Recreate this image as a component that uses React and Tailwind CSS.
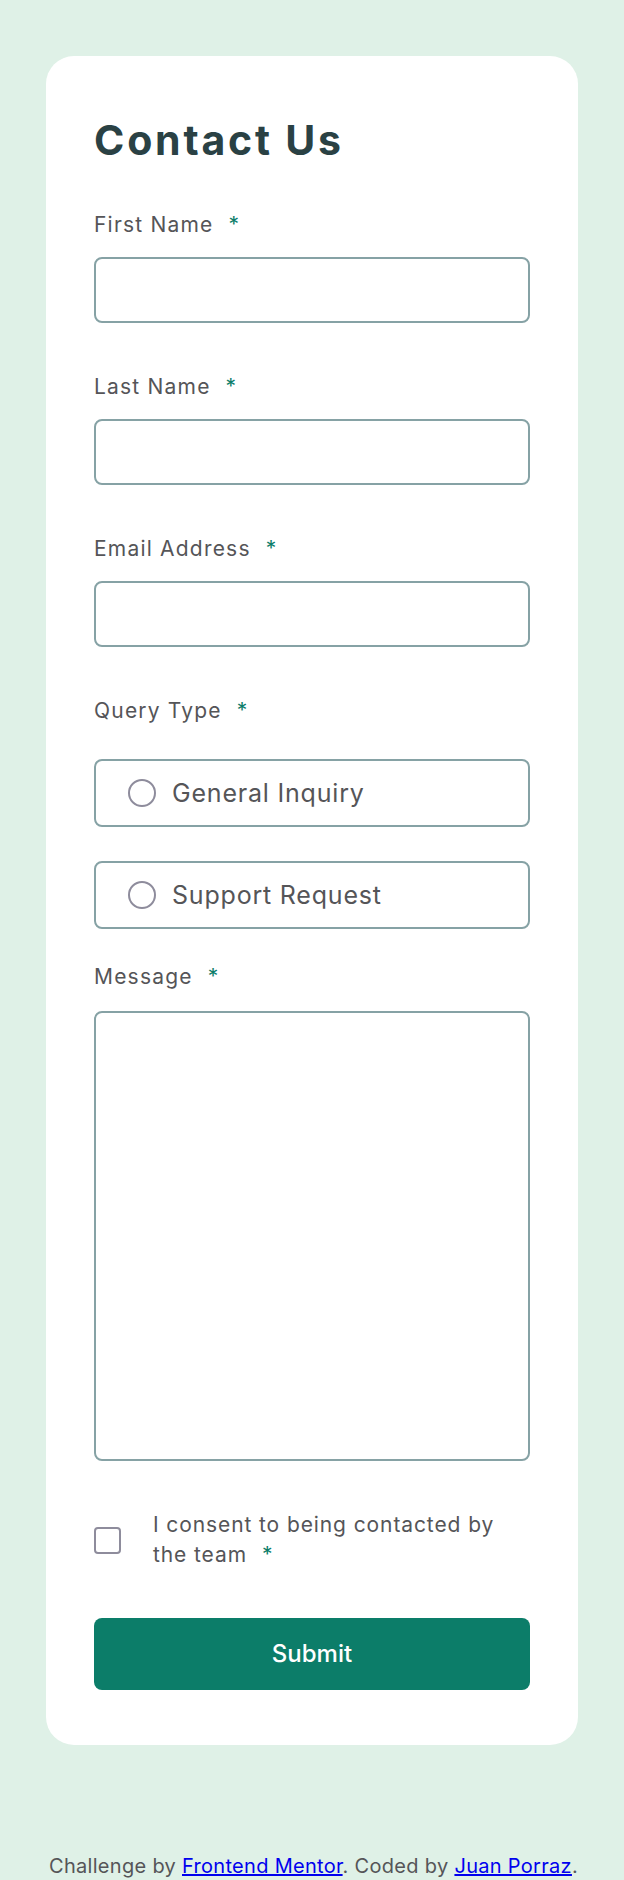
const fields = [
  { id: "firstName", label: "First Name", type: "text" },
  { id: "lastName", label: "Last Name", type: "text" },
  { id: "email", label: "Email Address", type: "email" },
];

const queryTypes = ["General Inquiry", "Support Request"];

const Required = () => (
  <span className="ml-[15px] text-[#0c7d69]">*</span>
);

const Label = ({ htmlFor, children }) => (
  <label
    htmlFor={htmlFor}
    className="block text-[21px] leading-[24px] tracking-[1.2px] text-[#555558]"
  >
    {children}
    <Required />
  </label>
);

export default function App() {
  return (
    <div
      className="min-h-[1880px] bg-[#dff1e7] px-[46px] pt-[56px]"
      style={{ fontFamily: "Inter, 'Noto Sans', sans-serif" }}
    >
      <main className="rounded-[28px] bg-white px-[48px] pt-[60px] pb-[55px]">
        <h1 className="text-[41px] leading-[48px] font-bold tracking-[2.8px] text-[#2a4144]">
          Contact Us
        </h1>

        <form className="mt-[49px]" onSubmit={(e) => e.preventDefault()}>
          {fields.map((field) => (
            <div key={field.id} className="mb-[52px]">
              <Label htmlFor={field.id}>{field.label}</Label>
              <input
                id={field.id}
                type={field.type}
                className="mt-[20px] block h-[66px] w-full rounded-[8px] border-2 border-[#86a2a5] bg-white px-5 text-[21px] outline-none"
              />
            </div>
          ))}

          <fieldset>
            <legend className="block text-[21px] leading-[24px] tracking-[1.2px] text-[#555558]">
              Query Type
              <Required />
            </legend>
            <div className="mt-[36px] flex flex-col gap-[34px]">
              {queryTypes.map((q) => (
                <label
                  key={q}
                  className="flex h-[68px] cursor-pointer items-center gap-[16px] rounded-[8px] border-2 border-[#86a2a5] px-[32px]"
                >
                  <input
                    type="radio"
                    name="queryType"
                    className="h-[28px] w-[28px] shrink-0 appearance-none rounded-full border-2 border-[#8e8c9c]"
                  />
                  <span className="text-[25px] leading-[30px] tracking-[0.8px] text-[#555558]">
                    {q}
                  </span>
                </label>
              ))}
            </div>
          </fieldset>

          <div className="mt-[36px]">
            <Label htmlFor="message">Message</Label>
            <textarea
              id="message"
              className="mt-[22px] block h-[450px] w-full resize-none rounded-[8px] border-2 border-[#86a2a5] bg-white p-4 text-[21px] outline-none"
            />
          </div>

          <label className="mt-[49px] flex cursor-pointer items-center gap-[32px]">
            <input
              type="checkbox"
              className="h-[27px] w-[27px] shrink-0 appearance-none rounded-[4px] border-2 border-[#8e8c9c]"
            />
            <span className="max-w-[350px] text-[21px] leading-[30px] tracking-[0.9px] text-[#555558]">
              I consent to being contacted by the team
              <Required />
            </span>
          </label>

          <button
            type="submit"
            className="mt-[48px] h-[72px] w-full rounded-[8px] bg-[#0c7d69] text-[24px] font-medium text-white"
          >
            Submit
          </button>
        </form>
      </main>

      <footer className="mt-[109px] pl-[3px] text-[20px] leading-[24px] tracking-[0.3px] text-[#555558]">
        Challenge by{" "}
        <a href="#" className="text-[#0000ee] underline">
          Frontend Mentor
        </a>
        . Coded by{" "}
        <a href="#" className="text-[#0000ee] underline">
          Juan Porraz
        </a>
        .
      </footer>
    </div>
  );
}
